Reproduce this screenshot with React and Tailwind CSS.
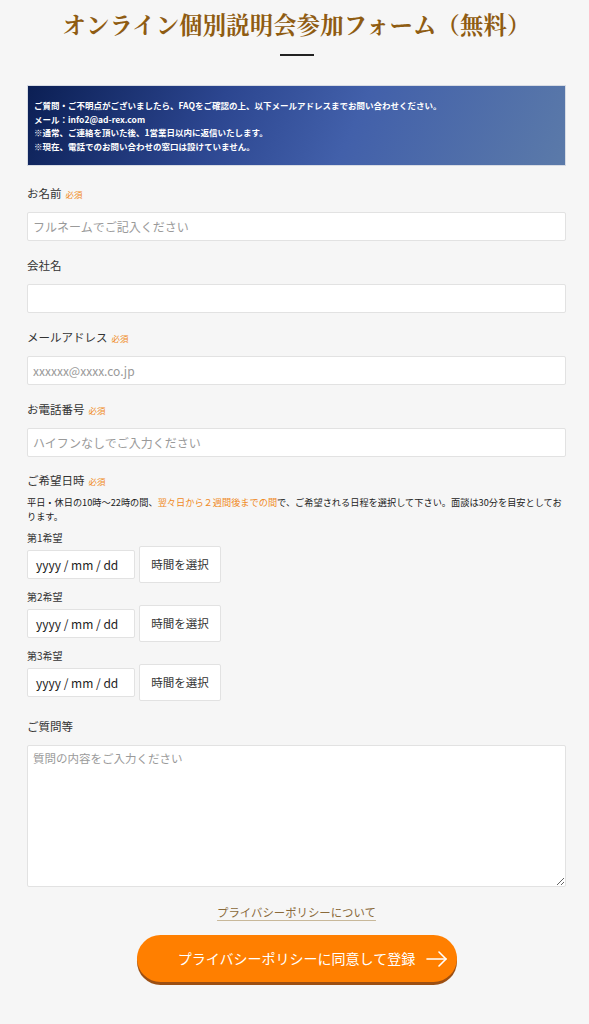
import React from "react";

const font = { fontFamily: '"Noto Sans CJK JP", "Noto Sans", sans-serif' };

function Label({ children, required }) {
  return (
    <div className="flex items-center h-[18px] mb-[9px]">
      <span className="text-[11.5px] text-[#333]">{children}</span>
      {required && <span className="ml-[4px] text-[8.5px] text-[#f08a24]">必須</span>}
    </div>
  );
}

function TextInput({ placeholder }) {
  return (
    <input
      type="text"
      placeholder={placeholder}
      className="block w-full h-[29px] bg-white border border-[#e2e2e2] rounded-[2px] px-[5px] text-[12px] text-[#333] placeholder:text-[#9a9a9a] outline-none"
      style={font}
    />
  );
}

function DateRow({ label, first }) {
  return (
    <div className={first ? "mt-[7px]" : "mt-[6px]"}>
      <div className="h-[14px] flex items-center text-[10px] text-[#333]">{label}</div>
      <div className="flex items-center gap-[4px] mt-[2px]">
        <div className="w-[108px] h-[29px] bg-white border border-[#e2e2e2] rounded-[2px] flex items-center pl-[8px] text-[12px] text-[#222]">
          yyyy / mm / dd
        </div>
        <div className="w-[82px] h-[37px] bg-white border border-[#e2e2e2] rounded-[2px] flex items-center justify-center text-[11.5px] text-[#333]">
          時間を選択
        </div>
      </div>
    </div>
  );
}

export default function App() {
  return (
    <div className="min-h-[1024px] bg-[#f6f6f6] w-full" style={font}>
      <div className="pl-[27px] pr-[23px] pb-[40px]">
        <h1 className="pt-[6px] h-[42px] text-center text-[23.3px] leading-[36px] font-bold text-[#8f5c12] tracking-[0.2px]" style={{ fontFamily: '"Noto Serif CJK JP", "Noto Sans CJK JP", serif' }}>
          オンライン個別説明会参加フォーム（無料）
        </h1>
        <div className="mx-auto mt-[12px] w-[34px] h-[2px] bg-[#222]" />
        <div className="mt-[29px] h-[81px] border border-[#d8dce4] bg-[linear-gradient(115deg,#0b1f54_0%,#2c4690_35%,#4260aa_60%,#5b7aa9_100%)] pt-[13px] pl-[6px] text-white font-bold text-[8.5px] leading-[13.7px]">
          <div>ご質問・ご不明点がございましたら、FAQをご確認の上、以下メールアドレスまでお問い合わせください。</div>
          <div>メール：info2@ad-rex.com</div>
          <div>※通常、ご連絡を頂いた後、1営業日以内に返信いたします。</div>
          <div>※現在、電話でのお問い合わせの窓口は設けていません。</div>
        </div>

        <div className="mt-[19px]">
          <Label required>お名前</Label>
          <TextInput placeholder="フルネームでご記入ください" />
        </div>
        <div className="mt-[16px]">
          <Label>会社名</Label>
          <TextInput placeholder="" />
        </div>
        <div className="mt-[16px]">
          <Label required>メールアドレス</Label>
          <TextInput placeholder="xxxxxx@xxxx.co.jp" />
        </div>
        <div className="mt-[16px]">
          <Label required>お電話番号</Label>
          <TextInput placeholder="ハイフンなしでご入力ください" />
        </div>

        <div className="mt-[15px]">
          <div className="flex items-center h-[18px]">
            <span className="text-[11.5px] text-[#333]">ご希望日時</span>
            <span className="ml-[4px] text-[8.5px] text-[#f08a24]">必須</span>
          </div>
          <p className="mt-[5px] text-[9.2px] leading-[14px] text-[#222]">
            平日・休日の10時～22時の間、<span className="text-[#f08a24]">翌々日から２週間後までの間</span>で、ご希望される日程を選択して下さい。面談は30分を目安としております。
          </p>
          <DateRow label="第1希望" first />
          <DateRow label="第2希望" />
          <DateRow label="第3希望" />
        </div>

        <div className="mt-[17px]">
          <Label>ご質問等</Label>
          <textarea
            placeholder="質問の内容をご入力ください"
            className="block w-full h-[142px] bg-white border border-[#e2e2e2] rounded-[2px] px-[5px] py-[4px] text-[11.5px] text-[#333] placeholder:text-[#9a9a9a] outline-none"
            style={font}
          />
        </div>

        <div className="mt-[11px] text-center">
          <span className="text-[11.4px] text-[#8a6a3a] underline decoration-[#c8b89a] underline-offset-[3px]">
            プライバシーポリシーについて
          </span>
        </div>

        <div className="mt-[13px] flex justify-center">
          <div className="relative w-[320px] h-[47px] rounded-full bg-[#ff7f00] shadow-[0_3px_0_#9c4f12] flex items-center justify-center text-white text-[14px]">
            プライバシーポリシーに同意して登録
            <svg className="absolute right-[9px] top-1/2 -translate-y-1/2" width="22" height="16" viewBox="0 0 22 16" fill="none" stroke="white" strokeWidth="1.6" strokeLinecap="round" strokeLinejoin="round">
              <path d="M1 8 H20" />
              <path d="M13 1 L20 8 L13 15" />
            </svg>
          </div>
        </div>
      </div>
    </div>
  );
}
